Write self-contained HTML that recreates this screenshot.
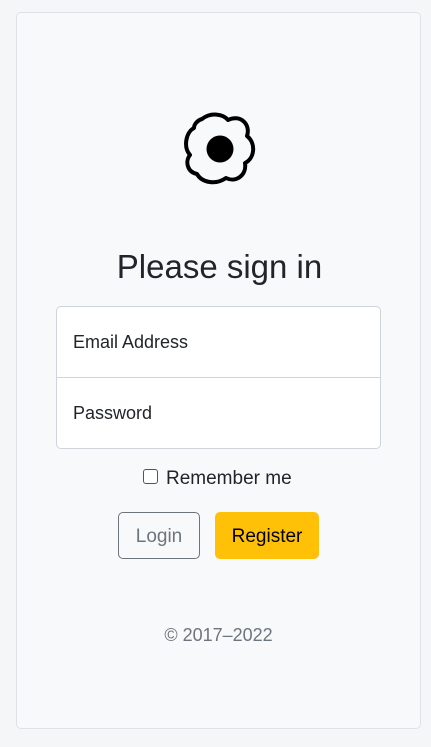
<!DOCTYPE html>
<html><head><style>
body{margin:0;background:#f5f6f7;font-family:"Liberation Sans",sans-serif;width:431px;height:747px;position:relative;overflow:hidden}
.card{position:absolute;left:16px;top:12px;width:403px;height:715px;background:#f8f9fa;border:1px solid #dee2e6;border-radius:5px}
.abs{position:absolute}
h1{position:absolute;left:0;width:405px;top:235px;margin:0;text-align:center;font-weight:400;font-size:33px;color:#212529}
.in{position:absolute;left:39px;width:325px;height:72px;background:#fff;border:1px solid #ced4da;font-size:18px;color:#212529;box-sizing:border-box;padding-left:16px;line-height:70px}
</style></head><body>
<div class="card">
<svg class="abs" style="left:154px;top:88px" width="100" height="100" viewBox="170 100 100 100">
<path d="M201,118 C210,111 222,113 227,119 C239,113 250,123 246,135 C255,142 254,157 244,162 C246,174 235,182 225,177 C215,184 201,182 196,173 C186,171 184,160 189,154 C182,146 185,131 193,127 C193,123 197,119 201,118 Z" fill="none" stroke="#000" stroke-width="4" stroke-linejoin="round"/>
<circle cx="219" cy="148" r="13.5" fill="#000"/>
</svg>
<h1>Please sign in</h1>
<div class="in" style="top:293px;border-radius:5px 5px 0 0">Email Address</div>
<div class="in" style="top:364px;border-radius:0 0 5px 5px">Password</div>
<div class="abs" style="left:126px;top:456px;width:13px;height:13px;border:1px solid #555;border-radius:3px;background:#fff"></div>
<div class="abs" style="left:149px;top:455px;font-size:19px;color:#212529">Remember me</div>
<div class="abs" style="left:101px;top:499px;width:80px;height:45px;border:1px solid #6c757d;border-radius:5px;color:#6c757d;font-size:19px;line-height:47px;text-align:center">Login</div>
<div class="abs" style="left:198px;top:499px;width:104px;height:47px;background:#ffc107;border-radius:5px;color:#000;font-size:19px;line-height:49px;text-align:center">Register</div>
<div class="abs" style="left:0;width:403px;top:612px;text-align:center;font-size:18px;color:#6c757d">© 2017–2022</div>
</div>
</body></html>
